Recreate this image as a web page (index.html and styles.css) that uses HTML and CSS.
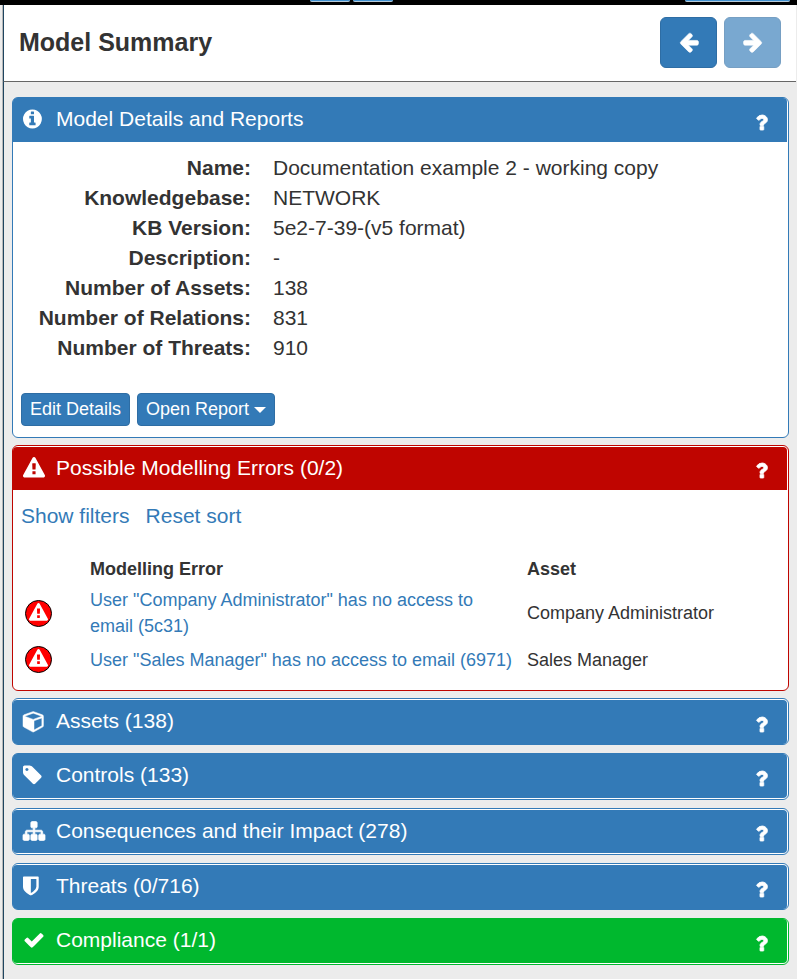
FILE: index.html
```html
<!DOCTYPE html>
<html lang="en">
<head>
<meta charset="utf-8">
<meta name="viewport" content="width=device-width, initial-scale=1">
<title>Model Summary</title>
<link rel="stylesheet" href="styles.css">
</head>
<body>
<svg class="defs" aria-hidden="true">
  <symbol id="question" viewBox="344 0 1104 1792"><path stroke="currentColor" stroke-width="70" d="M1088 1256v240q0 16-12 28t-28 12h-240q-16 0-28-12t-12-28v-240q0-16 12-28t28-12h240q16 0 28 12t12 28zm316-600q0 54-15.500 101t-35 76.500-55 59.500-57.500 43.500-61 35.500q-41 23-68.500 65t-27.500 67q0 17-12 32.500t-28 15.500h-240q-15 0-25.500-18.500t-10.500-37.500v-45q0-83 65-156.500t143-108.500q59-27 84-56t25-76q0-42-46.500-74t-107.500-32q-65 0-108 29-35 25-107 115-13 16-31 16-12 0-25-8l-164-125q-13-10-15.500-25t5.500-28q160-266 464-266 80 0 161 31t146 83 106 127.500 41 158.500z"/></symbol>
  <symbol id="warning" viewBox="0 0 1792 1792"><path d="M1024 1375v-190q0-14-9.500-23.500t-22.500-9.500h-192q-13 0-22.500 9.500t-9.500 23.500v190q0 14 9.500 23.500t22.500 9.500h192q13 0 22.500-9.500t9.500-23.500zm-2-374l18-459q0-12-10-19-13-11-24-11h-220q-11 0-24 11-10 7-10 21l17 457q0 10 10 16.500t24 6.500h185q14 0 23.500-6.500t10.500-16.500zm-14-934l768 1408q35 63-2 126-17 29-46.500 46t-63.500 17h-1536q-34 0-63.500-17t-46.500-46q-37-63-2-126l768-1408q17-31 47-49t65-18 65 18 47 49z"/></symbol>
</svg>

<nav class="topbar" aria-label="Toolbar">
  <button class="tool" type="button" aria-label="Tool one"></button>
  <button class="tool" type="button" aria-label="Tool two"></button>
  <button class="tool tool-wide" type="button" aria-label="Tool three"></button>
</nav>

<main class="sidebar">
  <header class="page-header">
    <h1>Model Summary</h1>
    <div class="history">
      <button class="btn btn-nav" type="button" aria-label="Back"><svg class="icon" viewBox="0 0 1792 1792"><path stroke="currentColor" stroke-width="50" d="M1664 896v128q0 53-32.500 90.500t-84.500 37.500h-704l293 294q38 36 38 90t-38 90l-75 76q-37 37-90 37-52 0-91-37l-651-652q-37-37-37-90 0-52 37-91l651-650q38-38 91-38 52 0 90 38l75 74q38 38 38 91t-38 91l-293 293h704q52 0 84.500 37.500t32.500 90.500z"/></svg></button>
      <button class="btn btn-nav" type="button" aria-label="Forward" disabled><svg class="icon" viewBox="0 0 1792 1792"><path stroke="currentColor" stroke-width="50" d="M1600 960q0 54-37 91l-651 651q-39 37-91 37-51 0-90-37l-75-75q-38-38-38-91t38-91l293-293h-704q-52 0-84.500-37.500t-32.500-90.500v-128q0-53 32.500-90.500t84.500-37.500h704l-293-294q-38-36-38-90t38-90l75-75q38-38 90-38 53 0 91 38l651 651q37 35 37 90z"/></svg></button>
    </div>
  </header>

  <div class="panels">
    <section class="panel">
      <h2 class="heading">
        <svg class="icon" viewBox="128 0 1792 1792"><path d="M1152 1376v-160q0-14-9-23t-23-9h-96v-512q0-14-9-23t-23-9h-320q-14 0-23 9t-9 23v160q0 14 9 23t23 9h96v320h-96q-14 0-23 9t-9 23v160q0 14 9 23t23 9h448q14 0 23-9t9-23zm-128-896v-160q0-14-9-23t-23-9h-192q-14 0-23 9t-9 23v160q0 14 9 23t23 9h192q14 0 23-9t9-23zm640 416q0 209-103 385.500t-279.500 279.500-385.500 103-385.500-103-279.500-279.500-103-385.500 103-385.500 279.500-279.500 385.500-103 385.500 103 279.500 279.500 103 385.500z"/></svg>
        <span class="title">Model Details and Reports</span>
        <button class="help" type="button" aria-label="Help"><svg><use href="#question"/></svg></button>
      </h2>
      <div class="body">
        <dl class="details">
          <dt>Name:</dt><dd>Documentation example 2 - working copy</dd>
          <dt>Knowledgebase:</dt><dd>NETWORK</dd>
          <dt>KB Version:</dt><dd>5e2-7-39-(v5 format)</dd>
          <dt>Description:</dt><dd>-</dd>
          <dt>Number of Assets:</dt><dd>138</dd>
          <dt>Number of Relations:</dt><dd>831</dd>
          <dt>Number of Threats:</dt><dd>910</dd>
        </dl>
        <div class="actions">
          <button class="btn" type="button">Edit Details</button>
          <button class="btn" type="button">Open Report<span class="caret"></span></button>
        </div>
      </div>
    </section>

    <section class="panel danger line-top">
      <h2 class="heading">
        <svg class="icon"><use href="#warning"/></svg>
        <span class="title">Possible Modelling Errors (0/2)</span>
        <button class="help" type="button" aria-label="Help"><svg><use href="#question"/></svg></button>
      </h2>
      <div class="body">
        <div class="filters"><a href="#filters">Show filters</a><a href="#sort">Reset sort</a></div>
        <table class="errors">
          <thead>
            <tr><th class="status"></th><th class="message">Modelling Error</th><th>Asset</th></tr>
          </thead>
          <tbody>
            <tr>
              <td class="status"><span class="badge"><svg><use href="#warning"/></svg></span></td>
              <td><a href="#5c31">User "Company Administrator" has no access to email (5c31)</a></td>
              <td>Company Administrator</td>
            </tr>
            <tr>
              <td class="status"><span class="badge"><svg><use href="#warning"/></svg></span></td>
              <td><a href="#6971">User "Sales Manager" has no access to email (6971)</a></td>
              <td>Sales Manager</td>
            </tr>
          </tbody>
        </table>
      </div>
    </section>

    <section class="panel collapsed line-top">
      <h2 class="heading">
        <svg class="icon" viewBox="0 0 1792 1792"><path stroke="currentColor" stroke-width="40" d="M896 1629l640-349v-636l-640 233v752zm-64-865l698-254-698-254-698 254zm832-252v768q0 35-18 65t-49 47l-704 384q-28 16-61 16t-61-16l-704-384q-31-17-49-47t-18-65v-768q0-40 23-73t61-47l704-256q22-8 44-8t44 8l704 256q38 14 61 47t23 73z"/></svg>
        <span class="title">Assets (138)</span>
        <button class="help" type="button" aria-label="Help"><svg><use href="#question"/></svg></button>
      </h2>
    </section>

    <section class="panel collapsed line-bottom">
      <h2 class="heading">
        <svg class="icon" viewBox="128 0 1792 1792"><path d="M576 448q0-53-37.500-90.500t-90.500-37.500-90.500 37.500-37.500 90.500 37.500 90.500 90.500 37.500 90.500-37.500 37.500-90.500zm1067 576q0 53-37 90l-491 492q-39 37-91 37-53 0-90-37l-715-716q-38-37-64.500-101t-26.500-117v-416q0-52 38-90t90-38h416q53 0 117 26.500t102 64.500l715 714q37 39 37 91z"/></svg>
        <span class="title">Controls (133)</span>
        <button class="help" type="button" aria-label="Help"><svg><use href="#question"/></svg></button>
      </h2>
    </section>

    <section class="panel collapsed line-top line-bottom">
      <h2 class="heading">
        <svg class="icon" viewBox="0 0 1792 1792"><path stroke="currentColor" stroke-width="60" d="M1792 1248v320q0 40-28 68t-68 28h-320q-40 0-68-28t-28-68v-320q0-40 28-68t68-28h96v-192h-512v192h96q40 0 68 28t28 68v320q0 40-28 68t-68 28h-320q-40 0-68-28t-28-68v-320q0-40 28-68t68-28h96v-192h-512v192h96q40 0 68 28t28 68v320q0 40-28 68t-68 28h-320q-40 0-68-28t-28-68v-320q0-40 28-68t68-28h96v-192q0-52 38-90t90-38h512v-192h-96q-40 0-68-28t-28-68v-320q0-40 28-68t68-28h320q40 0 68 28t28 68v320q0 40-28 68t-68 28h-96v192h512q52 0 90 38t38 90v192h96q40 0 68 28t28 68z"/></svg>
        <span class="title">Consequences and their Impact (278)</span>
        <button class="help" type="button" aria-label="Help"><svg><use href="#question"/></svg></button>
      </h2>
    </section>

    <section class="panel collapsed line-top">
      <h2 class="heading">
        <svg class="icon" viewBox="256 0 1792 1792"><path d="M1344 960v-640h-448v1137q119-63 213-137 235-184 235-360zm192-768v768q0 86-33.500 170.500t-83 150-118 127.500-126.500 103-121 77.500-89.500 49.500-42.500 20q-12 6-26 6t-26-6q-16-7-42.500-20t-89.500-49.500-121-77.500-126.500-103-118-127.500-83-150-33.500-170.500v-768q0-26 19-45t45-19h1152q26 0 45 19t19 45z"/></svg>
        <span class="title">Threats (0/716)</span>
        <button class="help" type="button" aria-label="Help"><svg><use href="#question"/></svg></button>
      </h2>
    </section>

    <section class="panel collapsed success line-bottom">
      <h2 class="heading">
        <svg class="icon" viewBox="0 0 1792 1792"><path d="M1671 566q0 40-28 68l-724 724-136 136q-28 28-68 28t-68-28l-136-136-362-362q-28-28-28-68t28-68l136-136q28-28 68-28t68 28l294 295 656-657q28-28 68-28t68 28l136 136q28 28 28 68z"/></svg>
        <span class="title">Compliance (1/1)</span>
        <button class="help" type="button" aria-label="Help"><svg><use href="#question"/></svg></button>
      </h2>
    </section>
  </div>
</main>
</body>
</html>
```
FILE: styles.css
```css
* { box-sizing: border-box; }

body {
  margin: 0;
  min-height: 100vh;
  display: flex;
  flex-direction: column;
  background: #ececec;
  color: #333;
  font: 21px/30px "Liberation Sans", Arial, sans-serif;
}

a { color: #337ab7; text-decoration: none; }
svg { display: block; fill: currentColor; }
.defs { position: absolute; width: 0; height: 0; }

.topbar {
  display: flex;
  gap: 3px;
  height: 5px;
  padding: 0 7px 3px 310px;
  background: #000;
}
.tool {
  width: 40px;
  padding: 0;
  border: 0;
  border-bottom: 1px solid #b5c9d8;
  border-radius: 0 0 4px 4px;
  background: #3f90cf;
}
.tool-wide { width: 105px; margin-left: auto; }

.sidebar {
  flex: 1;
  margin-left: 2px;
  border-left: 1px solid #b8b8b8;
}
.page-header, .panels { border-left: 1px solid #1f4560; }
.panels { min-height: calc(100vh - 82px); }

.page-header {
  display: flex;
  align-items: center;
  justify-content: space-between;
  height: 77px;
  margin-right: 1px;
  padding: 0 15px 2px;
  border-bottom: 1px solid #666;
  background: #fff;
}
h1 { margin: 0; font-size: 25px; line-height: 30px; }

.history, .actions { display: flex; gap: 7px; }

.btn {
  display: flex;
  align-items: center;
  justify-content: center;
  height: 33px;
  padding: 0 8px;
  border: 1px solid #2e6da4;
  border-radius: 4px;
  background: #337ab7;
  color: #fff;
  font: 18px/27px "Liberation Sans", Arial, sans-serif;
}
.btn-nav { width: 57px; height: 51px; border-radius: 6px; }
.btn:disabled { opacity: .65; }
.caret {
  margin-left: 5px;
  border: 6px solid transparent;
  border-top-color: #fff;
  border-bottom: 0;
}

.panels {
  display: flex;
  flex-direction: column;
  gap: 7px;
  padding: 15px 8px;
}

.panel {
  --tone: #337ab7;
  padding-right: 1px;
  border: 1px solid var(--tone);
  border-radius: 6px;
  background: #fff;
}
.danger { --tone: #bf0500; }
.success { --tone: #00b82e; }
.line-top { padding-top: 1px; }
.line-bottom { padding-bottom: 1px; }

.heading {
  display: flex;
  align-items: center;
  min-height: 44px;
  margin: 0;
  padding: 0 19px 2px 10px;
  border-radius: 4px;
  background: var(--tone);
  color: #fff;
  font-size: 21px;
  font-weight: 400;
}
.heading:not(:last-child) { border-radius: 4px 4px 0 0; }
.danger .heading { min-height: 43px; }

.collapsed { display: grid; height: 47px; }
.collapsed + .collapsed { margin-top: 1px; }
.collapsed .heading { min-height: 0; }

.icon { width: 22px; height: 22px; overflow: visible; }
.title { flex: 1; margin-left: 11px; }
.help {
  padding: 6px 0 0;
  border: 0;
  background: none;
  color: inherit;
}
.help svg { width: 13px; height: 21px; }

.body { padding: 11px 8px; }
.danger .body { padding-bottom: 14px; }

.details {
  display: grid;
  grid-template-columns: 230px 1fr;
  column-gap: 22px;
  margin: 0 0 30px;
}
dt { font-weight: 700; text-align: right; }
dd { margin: 0; }

.filters { display: flex; gap: 16px; }

.errors {
  width: 100%;
  margin-top: 25px;
  border-collapse: collapse;
  font-size: 18px;
  line-height: 26px;
}
.errors th { padding: 0 15px 1px 0; text-align: left; }
.errors td { padding: 4px 15px 3px 0; }
.errors .status { width: 69px; padding-left: 4px; }
.errors .message { width: 437px; }
.badge {
  display: grid;
  place-items: center;
  width: 27px;
  height: 27px;
  padding-bottom: 2px;
  border: 1px solid #000;
  border-radius: 50%;
  background: #f00;
  color: #fff;
}
.badge svg { width: 19px; height: 19px; }
```
